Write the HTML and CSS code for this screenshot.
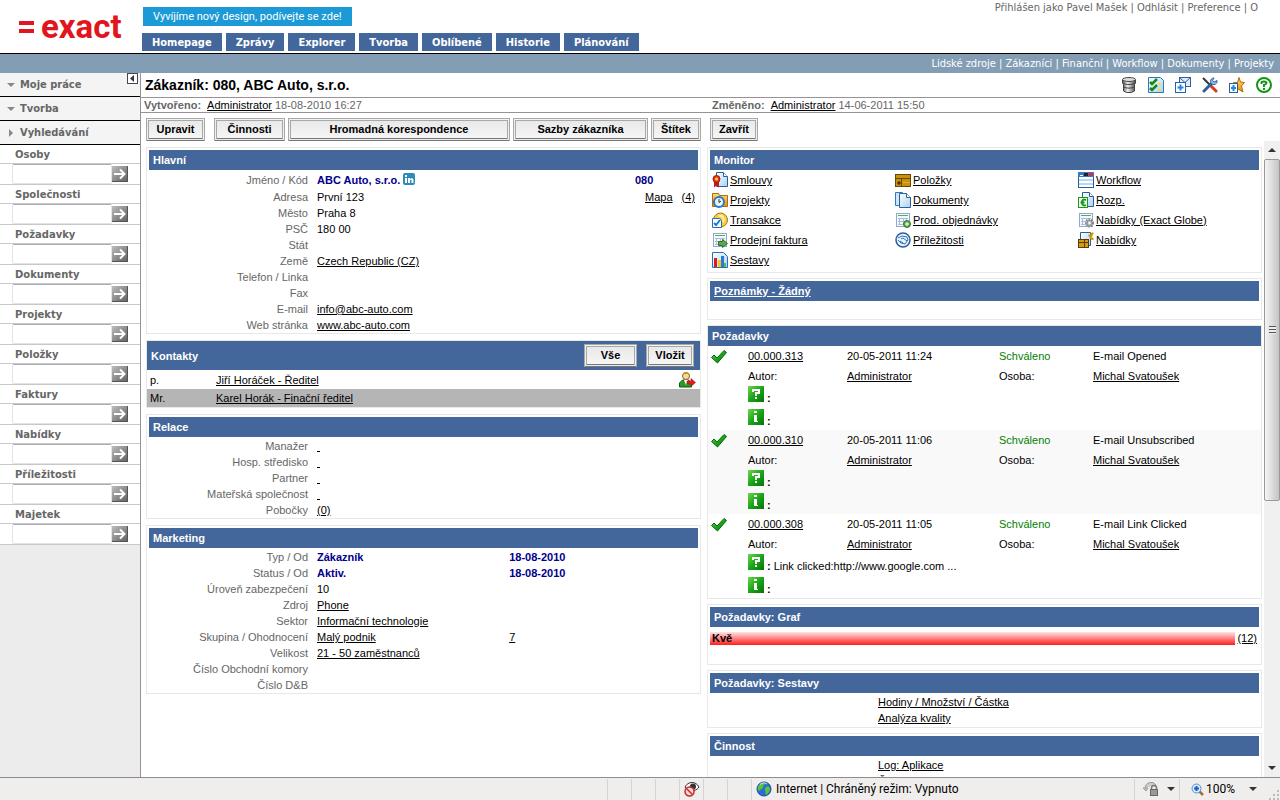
FILE: index.html
```html
<!DOCTYPE html>
<html lang="cs">
<head>
    <meta charset="UTF-8">
    <meta name="viewport" content="width=device-width, initial-scale=1.0">
    <title>Zákazník: 080, ABC Auto, s.r.o.</title>
    <link rel="stylesheet" href="styles.css">
</head>
<body>
    <!-- shared icons -->
    <svg class="defs" width="0" height="0" aria-hidden="true">
        <defs>
            <linearGradient id="gGray" x1="0" y1="0" x2="1" y2="1"><stop offset="0" stop-color="#bdbdbd"/><stop offset="1" stop-color="#5e5e62"/></linearGradient>
            <linearGradient id="gGreen" x1="0" y1="0" x2="1" y2="1"><stop offset="0" stop-color="#6fd64a"/><stop offset="0.5" stop-color="#1ba51b"/><stop offset="1" stop-color="#057505"/></linearGradient>
            <linearGradient id="gPage" x1="0" y1="0" x2="1" y2="1"><stop offset="0" stop-color="#ffffff"/><stop offset="1" stop-color="#a9d2f5"/></linearGradient>
            <linearGradient id="gMetal" x1="0" y1="0" x2="1" y2="0"><stop offset="0" stop-color="#555"/><stop offset="0.4" stop-color="#f0f0f0"/><stop offset="1" stop-color="#444"/></linearGradient>
            <linearGradient id="gGold" x1="0" y1="0" x2="0" y2="1"><stop offset="0" stop-color="#ffdf6a"/><stop offset="1" stop-color="#f08a10"/></linearGradient>
        </defs>
        <symbol id="i-go" viewBox="0 0 16 16"><rect width="16" height="16" fill="url(#gGray)"/><path d="M15.500 0v15.500H0" fill="none" stroke="#555"/><path d="M2 8h10M8 3.500l4.500 4.500L8 12.500" fill="none" stroke="#fff" stroke-width="2"/></symbol>
        <symbol id="i-check" viewBox="0 0 16 16"><path d="M.5 9.500L3 7l3 3 7-7.500L15.500 4.500 6.500 15z" fill="url(#gGreen)" stroke="#0a6a0a"/></symbol>
        <symbol id="i-question" viewBox="0 0 16 16"><rect width="16" height="16" fill="url(#gGreen)"/><path d="M4 3h8v5H9v2H7V6h3V5H6v1H4z" fill="#fff"/><rect x="7" y="11" width="2" height="2" fill="#fff"/></symbol>
        <symbol id="i-info" viewBox="0 0 16 16"><rect width="16" height="16" fill="url(#gGreen)"/><path d="M6 2h3v2H6zM6 6h3v6h1v1H6z" fill="#fff"/></symbol>
        <symbol id="i-sheet" viewBox="0 0 16 16"><rect x="1.500" y="1.500" width="13" height="13" fill="#f4f8ff" stroke="#8fa9cf"/><path d="M3 3.500h10" stroke="#5aa85a"/><path d="M3 6.500h10M3 9.500h10M3 12.500h10M4.500 6v7M8.500 6v7M11.500 6v7" stroke="#a9bede"/></symbol>
        <symbol id="i-page" viewBox="0 0 16 16"><path d="M4.500.5h7l4 4v10h-11z" fill="url(#gPage)" stroke="#2a6099"/><path d="M11.500.5v4h4" fill="#fff" stroke="#2a6099"/></symbol>
    </svg>

    <header class="header">
        <a class="logo" href="#"><span class="logo-mark"></span><span>exact</span></a>
        <div class="header-main">
            <a class="banner" href="#">Vyvíjíme nový design, podívejte se zde!</a>
            <nav class="tabs">
                <a href="#">Homepage</a>
                <a href="#">Zprávy</a>
                <a href="#">Explorer</a>
                <a href="#">Tvorba</a>
                <a href="#">Oblíbené</a>
                <a href="#">Historie</a>
                <a href="#">Plánování</a>
            </nav>
        </div>
        <div class="user-links">Přihlášen jako Pavel Mašek | <a href="#">Odhlásit</a> | <a href="#">Preference</a> | <a href="#">O</a></div>
    </header>
    <nav class="subnav">
        <a href="#">Lidské zdroje</a> | <a href="#">Zákazníci</a> | <a href="#">Finanční</a> | <a href="#">Workflow</a> | <a href="#">Dokumenty</a> | <a href="#">Projekty</a>
    </nav>

    <div class="layout">
        <aside class="sidebar">
            <button class="collapse" type="button" aria-label="Skrýt"><svg width="11" height="11" viewBox="0 0 11 11"><rect x=".5" y=".5" width="10" height="10" fill="#fff" stroke="#445"/><path d="M7 2v7L3 5.500z" fill="#334"/></svg></button>
            <a class="menu" href="#"><span class="tri down"></span>Moje práce</a>
            <a class="menu" href="#"><span class="tri down"></span>Tvorba</a>
            <a class="menu" href="#"><span class="tri right"></span>Vyhledávání</a>
            <form class="search">
                <label for="s1">Osoby</label>
                <div class="search-row"><input type="text" id="s1"><button type="button" aria-label="Hledat osoby"><svg width="16" height="16"><use href="#i-go"/></svg></button></div>
                <label for="s2">Společnosti</label>
                <div class="search-row"><input type="text" id="s2"><button type="button" aria-label="Hledat společnosti"><svg width="16" height="16"><use href="#i-go"/></svg></button></div>
                <label for="s3">Požadavky</label>
                <div class="search-row"><input type="text" id="s3"><button type="button" aria-label="Hledat požadavky"><svg width="16" height="16"><use href="#i-go"/></svg></button></div>
                <label for="s4">Dokumenty</label>
                <div class="search-row"><input type="text" id="s4"><button type="button" aria-label="Hledat dokumenty"><svg width="16" height="16"><use href="#i-go"/></svg></button></div>
                <label for="s5">Projekty</label>
                <div class="search-row"><input type="text" id="s5"><button type="button" aria-label="Hledat projekty"><svg width="16" height="16"><use href="#i-go"/></svg></button></div>
                <label for="s6">Položky</label>
                <div class="search-row"><input type="text" id="s6"><button type="button" aria-label="Hledat položky"><svg width="16" height="16"><use href="#i-go"/></svg></button></div>
                <label for="s7">Faktury</label>
                <div class="search-row"><input type="text" id="s7"><button type="button" aria-label="Hledat faktury"><svg width="16" height="16"><use href="#i-go"/></svg></button></div>
                <label for="s8">Nabídky</label>
                <div class="search-row"><input type="text" id="s8"><button type="button" aria-label="Hledat nabídky"><svg width="16" height="16"><use href="#i-go"/></svg></button></div>
                <label for="s9">Příležitosti</label>
                <div class="search-row"><input type="text" id="s9"><button type="button" aria-label="Hledat příležitosti"><svg width="16" height="16"><use href="#i-go"/></svg></button></div>
                <label for="s10">Majetek</label>
                <div class="search-row"><input type="text" id="s10"><button type="button" aria-label="Hledat majetek"><svg width="16" height="16"><use href="#i-go"/></svg></button></div>
            </form>
        </aside>

        <main class="content">
            <div class="title-row">
                <h1>Zákazník: 080, ABC Auto, s.r.o.</h1>
                <div class="tools">
                    <a href="#" aria-label="Databáze"><svg width="16" height="16" viewBox="0 0 16 16"><path d="M1.500 3v3l1 1v7l3 1.500h5l3-1.500V7l1-1V3z" fill="url(#gMetal)" stroke="#444"/><ellipse cx="8" cy="2.500" rx="6.500" ry="2" fill="#ddd" stroke="#444"/><path d="M1.500 6c3 2 10 2 13 0M2.500 10c3 1.500 8 1.500 11 0" fill="none" stroke="#444"/></svg></a>
                    <a href="#" aria-label="Úkoly"><svg width="16" height="16" viewBox="0 0 16 16"><path d="M.5.500h12l3 3v12H.5z" fill="url(#gPage)" stroke="#2b78b8"/><path d="M2 5l2 2 5-5M2 11l2 2 5-5" fill="none" stroke="#118a11" stroke-width="2.500"/><circle cx="11.500" cy="7" r="1.500" fill="#ffd83a"/><circle cx="11.500" cy="12.500" r="1.500" fill="#ffd83a"/></svg></a>
                    <a href="#" aria-label="Nová zpráva"><svg width="16" height="16" viewBox="0 0 16 16"><rect x="4.500" y=".5" width="11" height="9" fill="#dcecfb" stroke="#34619b"/><path d="M4.500.5l5.500 5 5.500-5" fill="none" stroke="#34619b"/><rect x=".5" y="5.500" width="10" height="10" fill="#fff" stroke="#2b5f9e"/><path d="M5.500 7.500v6M2.500 10.500h6" stroke="#1c86e0" stroke-width="2"/></svg></a>
                    <a href="#" aria-label="Nástroje"><svg width="16" height="16" viewBox="0 0 16 16"><path d="M1 1l8 8" stroke="#333" stroke-width="2"/><path d="M9 9l5 5" stroke="#d93a1c" stroke-width="3" stroke-linecap="round"/><path d="M2 14l8-8" stroke="#2f5f9e" stroke-width="3" stroke-linecap="round"/><path d="M15 3.500a3.300 3.300 0 1 1-3-2.500l-1.500 2.500 1.500 1.500z" fill="#8fbbe6" stroke="#2f5f9e"/></svg></a>
                    <a href="#" aria-label="Přidat k oblíbeným"><svg width="16" height="16" viewBox="0 0 16 16"><path d="M10 .5l1.500 4.500 4 .5-3 3.500 1.500 6-5-3-5 2V8L4.500 5.500h4z" fill="url(#gGold)" stroke="#b06a10"/><rect x=".5" y="6.500" width="8" height="9" fill="#fff" stroke="#2b5f9e"/><path d="M4.500 8v6M2 11h5" stroke="#1c86e0" stroke-width="2"/></svg></a>
                    <a href="#" aria-label="Nápověda"><svg width="16" height="16" viewBox="0 0 16 16"><circle cx="8" cy="8" r="7" fill="#fff" stroke="#129612" stroke-width="2"/><path d="M5.500 7V5.500Q5.500 4.500 8 4.500t2.500 1.500Q10.500 7 8 8v2" fill="none" stroke="#129612" stroke-width="2"/><rect x="7" y="11" width="2" height="2" fill="#129612"/></svg></a>
                </div>
            </div>
            <div class="meta-row">
                <div><b>Vytvořeno:</b> <a href="#">Administrator</a> 18-08-2010 16:27</div>
                <div><b>Změněno:</b> <a href="#">Administrator</a> 14-06-2011 15:50</div>
            </div>
            <div class="actions">
                <button class="btn w-s gap-after" type="button">Upravit</button>
                <button class="btn w-m" type="button">Činnosti</button>
                <button class="btn w-xl" type="button">Hromadná korespondence</button>
                <button class="btn w-l" type="button">Sazby zákazníka</button>
                <button class="btn w-xs gap-after" type="button">Štítek</button>
                <button class="btn" type="button">Zavřít</button>
            </div>

            <div class="scroll-area">
                <div class="columns">
                    <div class="column">
                        <section class="panel">
                            <h2>Hlavní</h2>
                            <table class="fields">
                                <tr class="tall"><th>Jméno / Kód</th><td class="strong">ABC Auto, s.r.o. <svg class="linkedin" width="12" height="12" viewBox="0 0 12 12"><rect width="12" height="12" rx="2" fill="#2f8ab8"/><path d="M2 5h2v5H2zM2 2h2v2H2zM5 5h2v1c1-1.500 3.500-1 3.500 1v3h-2V7.500C8.500 6.500 7 6.500 7 7.500V10H5z" fill="#fff"/></svg></td><td class="code strong">080</td></tr>
                                <tr class="tall"><th>Adresa</th><td>První 123</td><td class="map"><a href="#">Mapa</a><a href="#">(4)</a></td></tr>
                                <tr><th>Město</th><td>Praha 8</td><td></td></tr>
                                <tr><th>PSČ</th><td>180 00</td><td></td></tr>
                                <tr><th>Stát</th><td></td><td></td></tr>
                                <tr><th>Země</th><td><a href="#">Czech Republic (CZ)</a></td><td></td></tr>
                                <tr><th>Telefon / Linka</th><td></td><td></td></tr>
                                <tr><th>Fax</th><td></td><td></td></tr>
                                <tr><th>E-mail</th><td><a href="#">info@abc-auto.com</a></td><td></td></tr>
                                <tr><th>Web stránka</th><td><a href="#">www.abc-auto.com</a></td><td></td></tr>
                            </table>
                        </section>

                        <section class="panel flush">
                            <div class="panel-head">
                                <h2>Kontakty</h2>
                                <button class="btn all" type="button">Vše</button>
                                <button class="btn" type="button">Vložit</button>
                            </div>
                            <table class="contacts">
                                <tr><td class="salutation">p.</td><td><a href="#">Jiří Horáček - Ředitel</a></td><td class="person"><svg width="17" height="17" viewBox="0 0 17 17"><path d="M.5 16v-4l3-3h6l3 3v4z" fill="#2a9a2a" stroke="#0c5c0c"/><path d="M5 9l2 5 2-5z" fill="#fff"/><circle cx="7" cy="5" r="3.500" fill="#f7d9a0" stroke="#8a6420"/><path d="M3.500 5c0-5 7-5 7 0L9 3H5z" fill="#c8922c"/><path d="M8 10h4V7.500l4.500 4-4.500 4V13H8z" fill="#e81c1c" stroke="#8e0c0c" stroke-width=".5"/></svg></td></tr>
                                <tr class="selected"><td class="salutation">Mr.</td><td><a href="#">Karel Horák - Finační ředitel</a></td><td></td></tr>
                            </table>
                        </section>

                        <section class="panel">
                            <h2>Relace</h2>
                            <table class="fields">
                                <tr><th>Manažer</th><td><a href="#">&nbsp;</a></td></tr>
                                <tr><th>Hosp. středisko</th><td><a href="#">&nbsp;</a></td></tr>
                                <tr><th>Partner</th><td><a href="#">&nbsp;</a></td></tr>
                                <tr><th>Mateřská společnost</th><td><a href="#">&nbsp;</a></td></tr>
                                <tr><th>Pobočky</th><td><a href="#">(0)</a></td></tr>
                            </table>
                        </section>

                        <section class="panel">
                            <h2>Marketing</h2>
                            <table class="fields halves">
                                <tr><th>Typ / Od</th><td class="strong">Zákazník</td><td class="strong">18-08-2010</td></tr>
                                <tr><th>Status / Od</th><td class="strong">Aktiv.</td><td class="strong">18-08-2010</td></tr>
                                <tr><th>Úroveň zabezpečení</th><td>10</td><td></td></tr>
                                <tr><th>Zdroj</th><td><a href="#">Phone</a></td><td></td></tr>
                                <tr><th>Sektor</th><td><a href="#">Informační technologie</a></td><td></td></tr>
                                <tr><th>Skupina / Ohodnocení</th><td><a href="#">Malý podnik</a></td><td><a href="#">7</a></td></tr>
                                <tr><th>Velikost</th><td><a href="#">21 - 50 zaměstnanců</a></td><td></td></tr>
                                <tr><th>Číslo Obchodní komory</th><td></td><td></td></tr>
                                <tr><th>Číslo D&amp;B</th><td></td><td></td></tr>
                            </table>
                        </section>
                    </div>

                    <div class="column tight">
                        <section class="panel">
                            <h2>Monitor</h2>
                            <div class="monitor">
                                <a href="#"><svg width="16" height="16" viewBox="0 0 16 16"><use href="#i-page"/><path d="M2 9v6.500l2.500-2 2.500 2V9z" fill="#c81818"/><circle cx="4.500" cy="7" r="3.500" fill="#e83a18" stroke="#a01010"/><circle cx="4.500" cy="7" r="1.500" fill="#ffd83a"/></svg><span>Smlouvy</span></a>
                                <a href="#"><svg width="16" height="16" viewBox="0 0 16 16"><rect x=".5" y="2.500" width="15" height="12" fill="#c8900c" stroke="#6a4a00"/><path d="M0 6.500h16M6.500 6v9" stroke="#6a4a00"/><path d="M8 10.500h7" stroke="#e0b030"/><path d="M4 9v4M2 11h4" stroke="#221800"/></svg><span>Položky</span></a>
                                <a href="#"><svg width="16" height="16" viewBox="0 0 16 16"><rect x=".5" y=".5" width="15" height="15" fill="#fff" stroke="#2a5f9e"/><rect width="16" height="5" fill="#3a78c8"/><path d="M2 3.500h3" stroke="#fff"/><path d="M6 2.500h4" stroke="#222" stroke-width="3"/><rect x="11" y="1" width="4" height="3" fill="#e82828"/><path d="M1 8h14M1 12h14" stroke="#b4d8f6" stroke-width="2"/></svg><span>Workflow</span></a>
                                <a href="#"><svg width="16" height="16" viewBox="0 0 16 16"><path d="M.5 1.500h6l1 2h8v11H.5z" fill="url(#gGold)" stroke="#b06a10"/><circle cx="7" cy="10" r="5" fill="#e8f3ff" stroke="#2a78c8" stroke-width="2"/><path d="M7 7v3.500l2-1.500" fill="none" stroke="#333"/></svg><span>Projekty</span></a>
                                <a href="#"><svg width="16" height="16" viewBox="0 0 16 16"><path d="M.5.500h7v13h-7z" fill="#cfe5fa" stroke="#2a78c8"/><path d="M4.500 1.500h7l4 4v10h-11z" fill="url(#gPage)" stroke="#2a6099"/><path d="M11.500 1.500v4h4" fill="#fff" stroke="#2a6099"/></svg><span>Dokumenty</span></a>
                                <a href="#"><svg width="16" height="16" viewBox="0 0 16 16"><use href="#i-page"/><rect x=".5" y="5.500" width="9" height="10" fill="#f2fff2" stroke="#1b961b"/><path d="M8 8C5 6.500 4 8.500 4 10.500s1.500 4 4 2.500M2.500 10.500h4" fill="none" stroke="#1b961b" stroke-width="2"/></svg><span>Rozp.</span></a>
                                <a href="#"><svg width="16" height="16" viewBox="0 0 16 16"><circle cx="8.500" cy="8" r="7" fill="#f6cf45" stroke="#a8780c"/><path d="M7 4c4-1 6 3 4 6" fill="none" stroke="#fff3b0" stroke-width="2"/><path d="M.5 6.500h7l2 2v7h-9z" fill="#fff" stroke="#2a6fb8"/><path d="M2 11l2 2 4-5" fill="none" stroke="#1c78d8" stroke-width="2"/></svg><span>Transakce</span></a>
                                <a href="#"><svg width="16" height="16" viewBox="0 0 16 16"><use href="#i-sheet"/><circle cx="12" cy="12" r="3.500" fill="#5aa848" stroke="#3a7a2c"/><path d="M12 10v4M10 12h4" stroke="#fff"/></svg><span>Prod. objednávky</span></a>
                                <a href="#"><svg width="16" height="16" viewBox="0 0 16 16"><use href="#i-sheet"/><circle cx="11.500" cy="11" r="3.500" fill="#ddd" stroke="#888" stroke-width="2" stroke-dasharray="1.500 1"/><circle cx="11.500" cy="11" r="2.500" fill="#ccc" stroke="#888"/><circle cx="11.500" cy="11" r="1" fill="#fff"/></svg><span>Nabídky (Exact Globe)</span></a>
                                <a href="#"><svg width="16" height="16" viewBox="0 0 16 16"><use href="#i-sheet"/><path d="M6.500 9.500h4v-2l5 4-5 4v-2h-4z" fill="#5aa848" stroke="#356e28"/></svg><span>Prodejní faktura</span></a>
                                <a href="#"><svg width="16" height="16" viewBox="0 0 16 16"><circle cx="8" cy="8" r="7" fill="#eaf4ff" stroke="#2a5f9e" stroke-width="1.500"/><path d="M3 6l4-2 5 1 1 3-3 4-4-1-3-3M6 7l2-1 4 3M5 9l3 2" fill="none" stroke="#2a6fb8"/></svg><span>Příležitosti</span></a>
                                <a href="#"><svg width="16" height="16" viewBox="0 0 16 16"><path d="M2.500.5h10v13h-10z" fill="url(#gPage)" stroke="#2a6099"/><rect x=".5" y="7.500" width="10" height="8" fill="#d29a18" stroke="#5a3c00"/><path d="M1 10.500h9M6.500 8v7" stroke="#5a3c00"/><path d="M15.500 1.500c-4-1-4 7 0 5M10.500 3.500h4" fill="none" stroke="#c89000" stroke-width="2"/></svg><span>Nabídky</span></a>
                                <a href="#"><svg width="16" height="16" viewBox="0 0 16 16"><path d="M.5.500h11l4 4v11H.5z" fill="url(#gPage)" stroke="#2a6fb8"/><rect x="2" y="6" width="3" height="9" fill="#e01818"/><rect x="6" y="8" width="3" height="7" fill="#f5c518"/><rect x="9" y="4" width="3" height="11" fill="#2a78d8"/><rect x="12" y="11" width="2" height="4" fill="#4ac04a"/></svg><span>Sestavy</span></a>
                            </div>
                        </section>

                        <section class="panel">
                            <h2><a href="#">Poznámky - Žádný</a></h2>
                            <div class="empty"></div>
                        </section>

                        <section class="panel flush">
                            <h2>Požadavky</h2>
                            <div class="request">
                                <svg width="16" height="16"><use href="#i-check"/></svg><a href="#">00.000.313</a><span>20-05-2011 11:24</span><span class="ok">Schváleno</span><span>E-mail Opened</span>
                                <span class="author">Autor:</span><a href="#">Administrator</a><span>Osoba:</span><a href="#">Michal Svatoušek</a>
                                <div class="note"><svg width="16" height="16"><use href="#i-question"/></svg><b>:</b></div>
                                <div class="note"><svg width="16" height="16"><use href="#i-info"/></svg><b>:</b></div>
                            </div>
                            <div class="request alt">
                                <svg width="16" height="16"><use href="#i-check"/></svg><a href="#">00.000.310</a><span>20-05-2011 11:06</span><span class="ok">Schváleno</span><span>E-mail Unsubscribed</span>
                                <span class="author">Autor:</span><a href="#">Administrator</a><span>Osoba:</span><a href="#">Michal Svatoušek</a>
                                <div class="note"><svg width="16" height="16"><use href="#i-question"/></svg><b>:</b></div>
                                <div class="note"><svg width="16" height="16"><use href="#i-info"/></svg><b>:</b></div>
                            </div>
                            <div class="request">
                                <svg width="16" height="16"><use href="#i-check"/></svg><a href="#">00.000.308</a><span>20-05-2011 11:05</span><span class="ok">Schváleno</span><span>E-mail Link Clicked</span>
                                <span class="author">Autor:</span><a href="#">Administrator</a><span>Osoba:</span><a href="#">Michal Svatoušek</a>
                                <div class="note"><svg width="16" height="16"><use href="#i-question"/></svg><b>:</b>Link clicked:http://www.google.com ...</div>
                                <div class="note"><svg width="16" height="16"><use href="#i-info"/></svg><b>:</b></div>
                            </div>
                        </section>

                        <section class="panel">
                            <h2>Požadavky: Graf</h2>
                            <div class="graph"><div class="graph-bar">Kvě</div><a href="#">(12)</a></div>
                        </section>

                        <section class="panel">
                            <h2>Požadavky: Sestavy</h2>
                            <ul class="reports">
                                <li><a href="#">Hodiny / Množství / Částka</a></li>
                                <li><a href="#">Analýza kvality</a></li>
                            </ul>
                        </section>

                        <section class="panel">
                            <h2>Činnost</h2>
                            <ul class="reports">
                                <li><a href="#">Log: Aplikace</a></li>
                                <li><a href="#">Časový přehled</a></li>
                            </ul>
                        </section>
                    </div>
                </div>
                <div class="scrollbar">
                    <span class="arrow up"></span>
                    <div class="track"><div class="thumb"><span class="grip"></span></div></div>
                    <span class="arrow down"></span>
                </div>
            </div>
        </main>
    </div>

    <footer class="statusbar">
        <span class="cell"></span>
        <span class="cell"></span>
        <span class="cell"></span>
        <span class="cell"><svg width="16" height="16" viewBox="0 0 16 16"><path d="M1 6c3-6 11-6 14 0-3 5-11 5-14 0z" fill="#fff" stroke="#333"/><circle cx="9" cy="5.500" r="3" fill="#333"/><circle cx="5.500" cy="10.500" r="4.500" fill="#f8dada" stroke="#cc2a2a" stroke-width="1.500"/><path d="M2.500 7.500l6 6" stroke="#cc2a2a" stroke-width="1.500"/></svg></span>
        <span class="cell"></span>
        <span class="cell"></span>
        <span class="cell zone"><svg width="16" height="16" viewBox="0 0 16 16"><circle cx="8" cy="8" r="7" fill="#2a6fd0" stroke="#1c4a94"/><path d="M3 4c2-3 5-3 6-2 0 2-2 2-2 4S4 8 3 10C1 8 2 5 3 4zM10 6c2-1 4 0 4 2s-2 5-4 6c-1-2 0-3-1-5 0-1 0-2 1-3z" fill="#5cc43c"/><path d="M4 3.500C6 1.500 9 1.500 11 3" fill="none" stroke="#cfe6ff"/></svg>Internet | Chráněný režim: Vypnuto</span>
        <span class="cell security"><svg width="16" height="16" viewBox="0 0 16 16"><path d="M2 7a6 6 0 0 1 11-3M0 7h5L3 10z" fill="#ccc" stroke="#999"/><path d="M8.500 9V7a2 2 0 0 1 5 0v2" fill="none" stroke="#777" stroke-width="1.500"/><rect x="7.500" y="8.500" width="7" height="6" fill="#999" stroke="#666"/></svg><span class="caret"></span></span>
        <span class="cell zoom"><svg width="13" height="13" viewBox="0 0 13 13"><path d="M8 8l4 4" stroke="#a07040" stroke-width="2.500"/><circle cx="5.500" cy="5.500" r="4.500" fill="#d8ebff" stroke="#5a8fc8"/><path d="M5.500 3v5M3 5.500h5" stroke="#1c5fc0" stroke-width="2"/></svg><span class="percent">100%</span><span class="caret"></span></span>
        <svg class="resize" width="10" height="10" viewBox="0 0 10 10"><path d="M8 0h2v2H8zM8 4h2v2H8zM8 8h2v2H8zM4 4h2v2H4zM4 8h2v2H4zM0 8h2v2H0z" fill="#bbb"/></svg>
    </footer>
</body>
</html>
```
FILE: styles.css
```css
* {
    box-sizing: border-box;
}
body {
    margin: 0;
    height: 100vh;
    overflow: hidden;
    display: flex;
    flex-direction: column;
    font: 11px/16px "Liberation Sans", Arial, sans-serif;
    color: #000;
    background: #fff;
}
a {
    color: inherit;
}
svg {
    display: block;
    flex: none;
}
button {
    padding: 0;
    border: none;
    background: none;
    cursor: pointer;
}
.defs {
    position: absolute;
}

/* header */
.header {
    display: flex;
    height: 54px;
    border-bottom: 1px solid #000;
}
.header a,
.subnav a {
    text-decoration: none;
}
.logo {
    display: flex;
    align-items: center;
    gap: 7px;
    width: 142px;
    padding-left: 19px;
    font: bold 33px/52px Roboto, sans-serif;
    color: #e2141e;
}
.logo-mark {
    width: 15px;
    height: 12px;
    border: solid #e2141e;
    border-width: 4px 0;
}
.header-main {
    flex: 1;
    padding-top: 7px;
}
.banner {
    display: block;
    width: fit-content;
    margin-left: 1px;
    padding: 0 10px;
    font: 11px/19px Roboto, "Open Sans", sans-serif;
    color: #fff;
    background: #1b9ad7;
}
.tabs {
    display: flex;
    gap: 4px;
    margin-top: 7px;
}
.tabs a {
    padding: 2px 10px 0;
    font: bold 11px/16px "DejaVu Sans Condensed", "DejaVu Sans", Verdana, sans-serif;
    color: #fff;
    background: #44679b;
}
.user-links {
    padding-right: 22px;
    font: 11px/16px "DejaVu Sans Condensed", "DejaVu Sans", Tahoma, sans-serif;
    color: #666;
}
.subnav {
    height: 19px;
    padding-right: 6px;
    text-align: right;
    font: 11px/20px "DejaVu Sans Condensed", "DejaVu Sans", Tahoma, sans-serif;
    color: #fff;
    background: #839db4;
}

.layout {
    flex: 1;
    display: flex;
    min-height: 0;
}

/* sidebar */
.sidebar {
    position: relative;
    width: 141px;
    flex: none;
    overflow: hidden;
    border-right: 1px solid #9a9095;
    background: #ececec;
}
.collapse {
    position: absolute;
    top: 0;
    right: 2px;
}
.menu {
    display: flex;
    align-items: center;
    height: 24px;
    padding-left: 7px;
    border-bottom: 1px solid #000;
    font: bold 11px/16px "DejaVu Sans Condensed", "DejaVu Sans", Verdana, sans-serif;
    color: #666;
    text-decoration: none;
    background: #f4f4f4;
}
.tri {
    width: 8px;
    margin-right: 5px;
}
.tri::before {
    content: "";
    display: block;
    width: 0;
    border: 4px solid transparent;
}
.tri.down::before {
    border-bottom: none;
    border-top-color: #888;
}
.tri.right::before {
    margin-left: 2px;
    border-right: none;
    border-left-color: #888;
}
.search {
    background: #fff;
}
.search label {
    display: block;
    height: 19px;
    padding-left: 15px;
    border-bottom: 1px solid #c8c8c8;
    font: bold 10px/20px "DejaVu Sans", Verdana, sans-serif;
    color: #666;
}
.search-row {
    display: flex;
    align-items: center;
    height: 21px;
    padding-left: 12px;
    border-bottom: 1px solid #c8c8c8;
}
.search-row input {
    width: 100px;
    height: 20px;
    padding: 1px 3px;
    border: 1px solid #e2e3ea;
    border-top-color: #abadb3;
    border-radius: 2px;
    font: inherit;
}

/* title and buttons */
.content {
    flex: 1;
    min-width: 0;
    display: flex;
    flex-direction: column;
}
.title-row {
    display: flex;
    align-items: center;
    justify-content: space-between;
    height: 24px;
    padding: 0 8px 0 4px;
}
h1 {
    margin: 0;
    font-size: 14px;
}
.tools {
    display: flex;
    gap: 11px;
}
.meta-row {
    display: grid;
    grid-template-columns: 1fr 1fr;
    height: 16px;
    padding-left: 3px;
    border: solid #9a9095;
    border-width: 1px 0;
    line-height: 14px;
    color: #666;
}
.meta-row a {
    margin-left: 3px;
    color: #000;
}
.actions {
    display: flex;
    gap: 3px;
    padding: 5px 5px 0;
}
.btn {
    height: 23px;
    min-width: 48px;
    padding: 0 4px 1px;
    border: 3px double #a8a8a8;
    border-bottom-color: #777;
    background: linear-gradient(#e9e9e9, #f5f5f5);
    font: bold 11px/16px "Liberation Sans", Arial, sans-serif;
    color: #000;
}
.w-xs {
    width: 50px;
}
.w-s {
    width: 59px;
}
.w-m {
    width: 71px;
}
.w-l {
    width: 135px;
}
.w-xl {
    width: 222px;
}
.gap-after {
    margin-right: 6px;
}

/* panels */
.scroll-area {
    flex: 1;
    display: flex;
    min-height: 0;
}
.columns {
    flex: 1;
    display: grid;
    grid-template-columns: 1fr 1fr;
    gap: 6px;
    padding: 6px 2px 0 5px;
    overflow: hidden;
}
.column {
    display: flex;
    flex-direction: column;
    gap: 6px;
    min-width: 0;
}
.column.tight {
    gap: 5px;
}
.panel {
    padding: 2px 2px 0;
    border: 1px solid #e8e8e8;
}
.panel.flush {
    padding: 0;
}
h2 {
    margin: 0;
    padding-left: 4px;
    font-size: 11px;
    line-height: 20px;
    color: #fff;
    background: #44679b;
}
table {
    width: 100%;
    border-collapse: collapse;
}
td,
th {
    padding: 0;
}
.fields {
    margin-top: 1px;
    table-layout: fixed;
}
.fields tr {
    height: 16px;
}
.fields tr.tall {
    height: 17px;
}
.fields th {
    width: 168px;
    padding-right: 9px;
    text-align: right;
    font-weight: normal;
    color: #666;
}
.fields.halves td:nth-child(2) {
    width: 35%;
}
.strong {
    font-weight: bold;
    color: #00008b;
}
.linkedin {
    display: inline-block;
    vertical-align: -1px;
}
.code {
    width: 63px;
}
.map {
    text-align: right;
    padding-right: 3px;
}
.map a + a {
    margin-left: 9px;
}
.panel-head {
    display: flex;
    align-items: center;
    gap: 9px;
    height: 29px;
    padding-right: 6px;
    background: #44679b;
}
.panel-head h2 {
    flex: 1;
}
.btn.all {
    width: 53px;
}
.contacts tr {
    height: 19px;
}
.contacts .selected {
    height: 18px;
    background: #b5b5b5;
}
.contacts .salutation {
    width: 69px;
    padding-left: 3px;
}
.person svg {
    margin: 1px 4px 1px auto;
}
.monitor {
    display: grid;
    grid-template-columns: repeat(3, 1fr);
    grid-auto-rows: 20px;
    align-items: center;
    padding-bottom: 2px;
}
.monitor a {
    display: flex;
    gap: 2px;
    padding-left: 2px;
    text-decoration: none;
}
.monitor span {
    text-decoration: underline;
}
.empty {
    height: 18px;
}
.request {
    display: grid;
    grid-template-columns: 37px 99px 152px 94px 1fr;
    grid-template-rows: 19px 21px 23px 21px;
    align-items: center;
    padding-left: 3px;
}
.request.alt {
    background: #f9f9f9;
}
.author {
    grid-column: 2;
}
.ok {
    color: #008000;
}
.note {
    display: flex;
    align-items: flex-start;
    align-self: start;
    gap: 3px;
    grid-column: 2 / -1;
    height: 21px;
    line-height: 24px;
}
.graph {
    display: flex;
    gap: 2px;
    padding: 4px 2px 18px 0;
    line-height: 15px;
}
.graph-bar {
    flex: 1;
    height: 13px;
    margin-top: 1px;
    padding-left: 2px;
    font-weight: bold;
    line-height: 13px;
    background: linear-gradient(#ffe4e4, #ff1e1e);
}
.reports {
    margin: 1px 0;
    padding: 0 0 0 168px;
    list-style: none;
}

/* scrollbar */
.scrollbar {
    display: flex;
    flex-direction: column;
    width: 16px;
    background: #f0f0f0;
}
.arrow {
    height: 18px;
    padding: 7px 4px;
}
.arrow::before,
.caret {
    content: "";
    display: block;
    width: 0;
    border: 4px solid transparent;
}
.arrow.up::before {
    border-top: none;
    border-bottom-color: #333;
}
.arrow.down::before,
.caret {
    border-bottom: none;
    border-top-color: #333;
}
.track {
    flex: 1;
}
.thumb {
    display: flex;
    align-items: center;
    justify-content: center;
    height: 57%;
    border: 1px solid #999;
    border-radius: 2px;
    background: linear-gradient(90deg, #f5f5f5, #dcdcdc 50%, #c4c4c4);
}
.grip {
    width: 7px;
    height: 8px;
    background: repeating-linear-gradient(#555 0 1px, #eee 1px 3px);
}

/* status bar */
.statusbar {
    display: flex;
    align-items: center;
    justify-content: flex-end;
    height: 23px;
    padding-right: 1px;
    border-top: 1px solid #8f8b8d;
    font: 12px/16px Roboto, "Open Sans", sans-serif;
    background: #f0eded;
}
.cell {
    display: flex;
    align-items: center;
    height: 21px;
    width: 24px;
    padding-left: 4px;
    border-left: 1px solid #d6d2d2;
}
.zone {
    width: 383px;
    gap: 4px;
}
.security {
    width: 45px;
    padding-left: 8px;
    gap: 8px;
}
.zoom {
    width: 90px;
    padding-left: 11px;
    gap: 2px;
}
.percent {
    flex: 1;
}
.zoom .caret {
    margin-right: 12px;
}
.resize {
    align-self: flex-end;
}
```
